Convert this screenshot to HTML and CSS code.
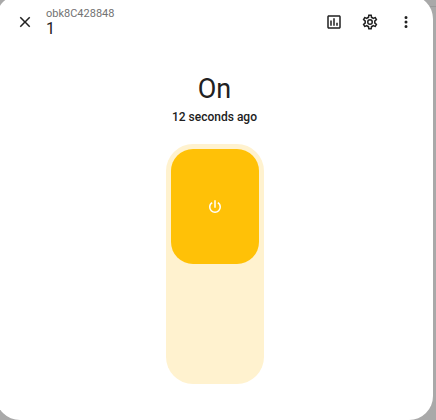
FILE: index.html
```html
<!DOCTYPE html>
<html lang="en">
<head>
    <meta charset="UTF-8">
    <meta name="viewport" content="width=device-width, initial-scale=1.0">
    <title>obk8C428848</title>
    <link rel="stylesheet" href="styles.css">
</head>
<body>

    <div class="dialog" role="dialog" aria-labelledby="dialog-title">
        <!-- Header -->
        <header class="header">
            <button class="icon-button" type="button" aria-label="Close">
                <svg class="icon" viewBox="0 0 24 24"><path d="M19,6.41L17.59,5L12,10.59L6.41,5L5,6.41L10.59,12L5,17.59L6.41,19L12,13.41L17.59,19L19,17.59L13.41,12L19,6.41Z"/></svg>
            </button>
            <div class="heading">
                <p class="device">obk8C428848</p>
                <h1 class="title" id="dialog-title">1</h1>
            </div>
            <button class="icon-button" type="button" aria-label="History">
                <svg class="icon" viewBox="0 0 24 24"><path d="M9 17H7V10H9V17M13 17H11V7H13V17M17 17H15V13H17V17M19 19H5V5H19V19.1M19 3H5C3.9 3 3 3.9 3 5V19C3 20.1 3.9 21 5 21H19C20.1 21 21 20.1 21 19V5C21 3.9 20.1 3 19 3Z"/></svg>
            </button>
            <button class="icon-button" type="button" aria-label="Settings">
                <svg class="icon" viewBox="0 0 24 24"><path d="M12,8A4,4 0 0,1 16,12A4,4 0 0,1 12,16A4,4 0 0,1 8,12A4,4 0 0,1 12,8M12,10A2,2 0 0,0 10,12A2,2 0 0,0 12,14A2,2 0 0,0 14,12A2,2 0 0,0 12,10M10,22C9.75,22 9.54,21.82 9.5,21.58L9.13,18.93C8.5,18.68 7.96,18.34 7.44,17.94L4.95,18.95C4.73,19.03 4.46,18.95 4.34,18.73L2.34,15.27C2.21,15.05 2.27,14.78 2.46,14.63L4.57,12.97L4.5,12L4.57,11L2.46,9.37C2.27,9.22 2.21,8.95 2.34,8.73L4.34,5.27C4.46,5.05 4.73,4.96 4.95,5.05L7.44,6.05C7.96,5.66 8.5,5.32 9.13,5.07L9.5,2.42C9.54,2.18 9.75,2 10,2H14C14.25,2 14.46,2.18 14.5,2.42L14.87,5.07C15.5,5.32 16.04,5.66 16.56,6.05L19.05,5.05C19.27,4.96 19.54,5.05 19.66,5.27L21.66,8.73C21.79,8.95 21.73,9.22 21.54,9.37L19.43,11L19.5,12L19.43,13L21.54,14.63C21.73,14.78 21.79,15.05 21.66,15.27L19.66,18.73C19.54,18.95 19.27,19.04 19.05,18.95L16.56,17.95C16.04,18.34 15.5,18.68 14.87,18.93L14.5,21.58C14.46,21.82 14.25,22 14,22H10M11.25,4L10.88,6.61C9.68,6.86 8.62,7.5 7.85,8.39L5.44,7.35L4.69,8.65L6.8,10.2C6.4,11.37 6.4,12.64 6.8,13.8L4.68,15.36L5.43,16.66L7.86,15.62C8.63,16.5 9.68,17.14 10.87,17.38L11.24,20H12.76L13.13,17.39C14.32,17.14 15.37,16.5 16.14,15.62L18.57,16.66L19.32,15.36L17.2,13.81C17.6,12.64 17.6,11.37 17.2,10.2L19.31,8.65L18.56,7.35L16.15,8.39C15.38,7.5 14.32,6.86 13.12,6.62L12.75,4H11.25Z"/></svg>
            </button>
            <button class="icon-button" type="button" aria-label="More options">
                <svg class="icon" viewBox="0 0 24 24"><path d="M12,16A2,2 0 0,1 14,18A2,2 0 0,1 12,20A2,2 0 0,1 10,18A2,2 0 0,1 12,16M12,10A2,2 0 0,1 14,12A2,2 0 0,1 12,14A2,2 0 0,1 10,12A2,2 0 0,1 12,10M12,4A2,2 0 0,1 14,6A2,2 0 0,1 12,8A2,2 0 0,1 10,6A2,2 0 0,1 12,4Z"/></svg>
            </button>
        </header>

        <!-- State and toggle -->
        <main class="content">
            <p class="state">On</p>
            <p class="changed">12 seconds ago</p>
            <label class="switch">
                <input class="switch-input" type="checkbox" role="switch" aria-label="Power" checked>
                <span class="handle">
                    <svg class="icon" viewBox="0 0 24 24"><path d="M16.56,5.44L15.11,6.89C16.84,7.94 18,9.83 18,12A6,6 0 0,1 12,18A6,6 0 0,1 6,12C6,9.83 7.16,7.94 8.88,6.88L7.44,5.44C5.36,6.88 4,9.28 4,12A8,8 0 0,0 12,20A8,8 0 0,0 20,12C20,9.28 18.64,6.88 16.56,5.44M13,3H11V13H13"/></svg>
                </span>
            </label>
        </main>
    </div>

</body>
</html>
```
FILE: styles.css
```css
* {
    box-sizing: border-box;
    margin: 0;
    padding: 0;
}
body {
    font-family: Roboto, "Noto Sans", sans-serif;
    background: linear-gradient(#a9a9a9 6px, #999 6px, #999 7px, #a9a9a9 7px) no-repeat #a9a9a9;
    color: #212121;
    overflow: hidden;
}
.dialog {
    margin: -5px 3px 0 -4px;
    padding-bottom: 36px;
    background-color: #fff;
    border-radius: 24px;
}
.header {
    display: flex;
    align-items: center;
    padding: 9px 9px 0 11px;
}
.icon-button {
    display: flex;
    align-items: center;
    justify-content: center;
    width: 36px;
    height: 36px;
    border: none;
    background: none;
    color: inherit;
    cursor: pointer;
}
.icon {
    display: block;
    width: 18px;
    height: 18px;
    fill: currentColor;
}
.heading {
    flex-grow: 1;
    padding: 1px 0 0 3px;
}
.device {
    font-size: 11px;
    line-height: 12px;
    color: #727272;
}
.title {
    font-size: 16px;
    font-weight: 400;
    line-height: 18px;
}
.content {
    display: flex;
    flex-direction: column;
    align-items: center;
    padding-top: 31px;
}
.state {
    font-size: 27px;
    line-height: 36px;
}
.changed {
    font-size: 12px;
    font-weight: 500;
    line-height: 20px;
}
.switch {
    display: flex;
    width: 98px;
    height: 240px;
    margin-top: 17px;
    padding: 5px;
    border-radius: 27px;
    background-color: #fff2cf;
    cursor: pointer;
}
.switch-input {
    position: absolute;
    opacity: 0;
}
.handle {
    display: flex;
    flex-grow: 1;
    align-items: center;
    justify-content: center;
    height: 50%;
    border-radius: 22px;
    background-color: #ffc107;
    color: #fff;
}
.switch-input:not(:checked) + .handle {
    align-self: flex-end;
}
```
